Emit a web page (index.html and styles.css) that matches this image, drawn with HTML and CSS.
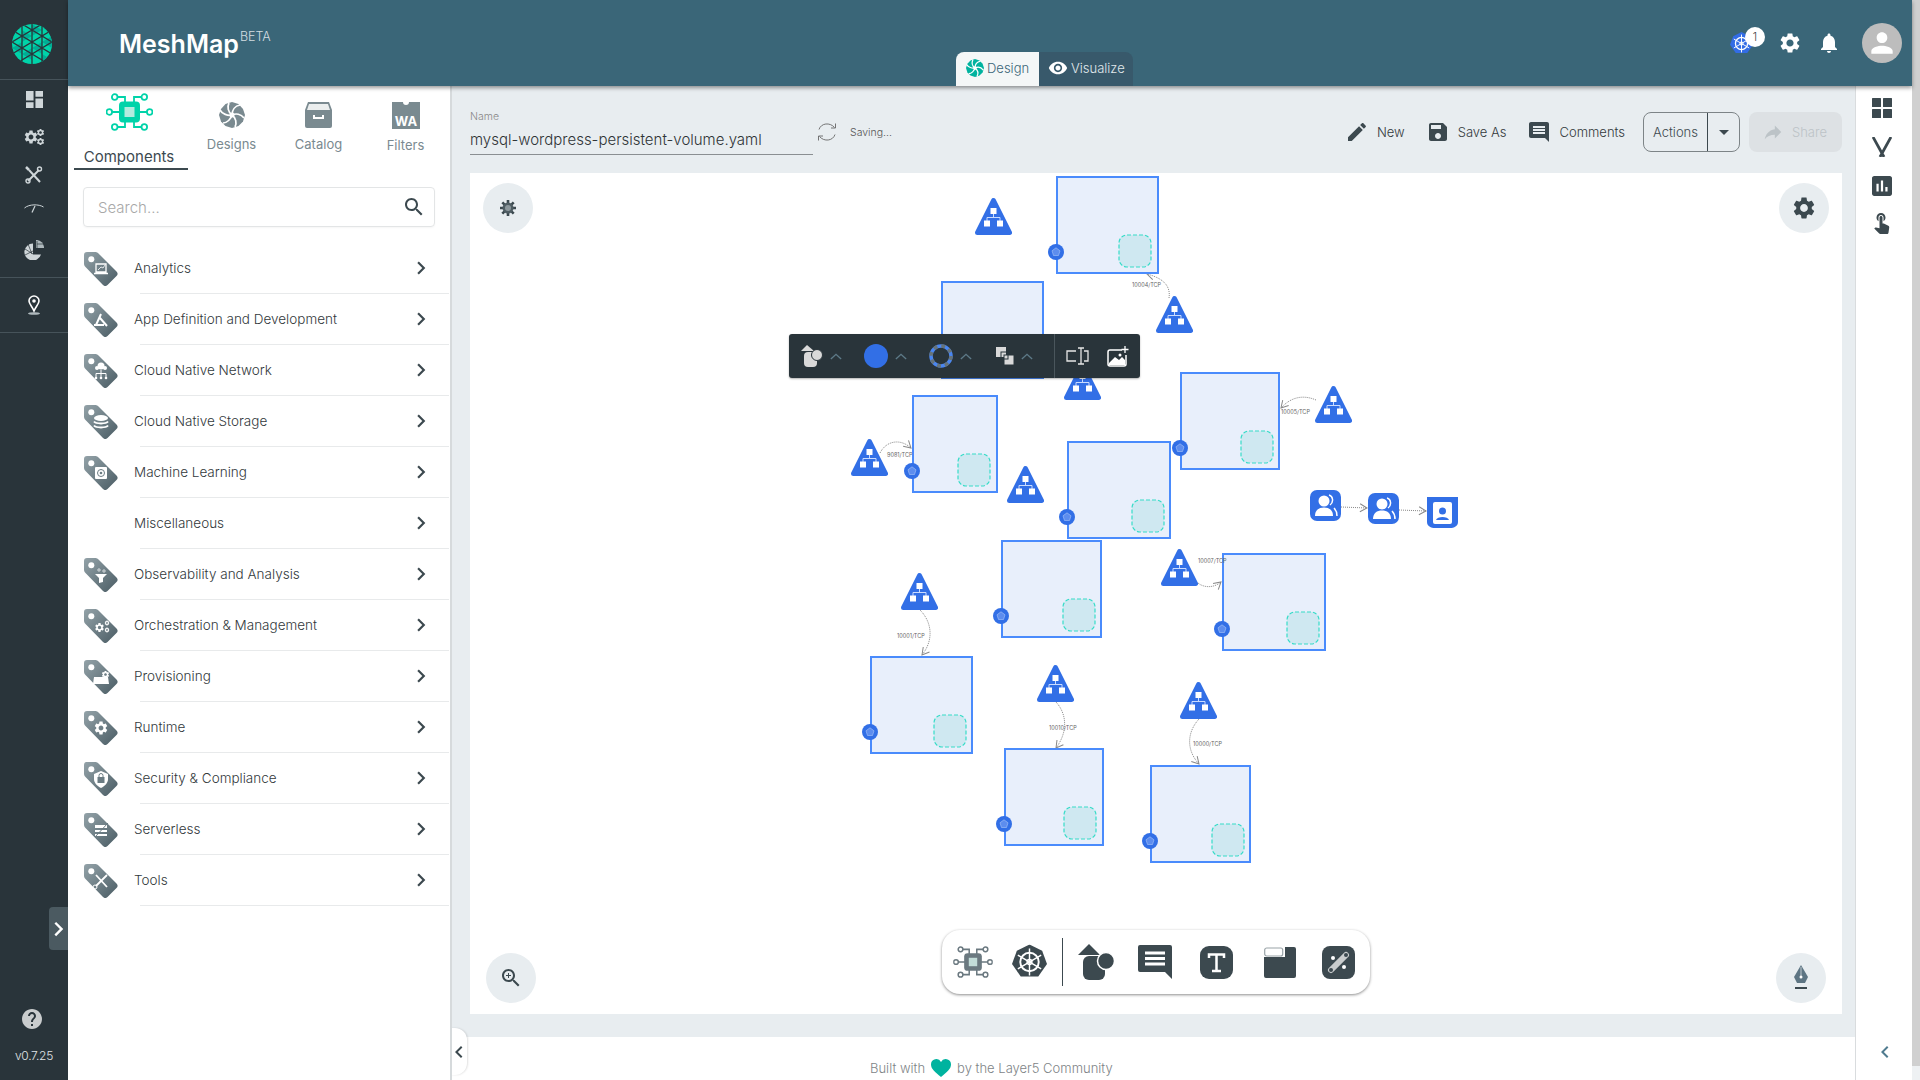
FILE: index.html
```html
<!DOCTYPE html>
<html lang="en">
<head>
    <meta charset="UTF-8">
    <meta name="viewport" content="width=device-width, initial-scale=1.0">
    <title>MeshMap</title>
    <link rel="stylesheet" href="styles.css">
</head>
<body>
    <!-- shared icons -->
    <svg class="sprite" aria-hidden="true">
        <defs>
            <linearGradient id="tagFill" x1="0" y1="0" x2="1" y2="1">
                <stop offset="0" stop-color="#93a2a8"/>
                <stop offset="1" stop-color="#4a5c64"/>
            </linearGradient>
            <clipPath id="logoClip"><circle cx="20" cy="20" r="20"/></clipPath>
            <marker id="arrow" markerWidth="10" markerHeight="10" refX="8" refY="5" orient="auto" markerUnits="userSpaceOnUse">
                <path d="M1 1L8 5L1 9" fill="none" stroke="#888" stroke-width="1"/>
            </marker>

            <symbol id="i-gear" viewBox="0 0 24 24"><path d="M19.14 12.94c.04-.3.06-.61.06-.94 0-.32-.02-.64-.07-.94l2.03-1.58c.18-.14.23-.41.12-.61l-1.92-3.32c-.12-.22-.37-.29-.59-.22l-2.39.96c-.5-.38-1.03-.7-1.62-.94l-.36-2.54c-.04-.24-.24-.41-.48-.41h-3.84c-.24 0-.43.17-.47.41l-.36 2.54c-.59.24-1.13.57-1.62.94l-2.39-.96c-.22-.08-.47 0-.59.22L2.74 8.87c-.12.21-.08.47.12.61l2.03 1.58c-.05.3-.09.63-.09.94s.02.64.07.94l-2.03 1.58c-.18.14-.23.41-.12.61l1.92 3.32c.12.22.37.29.59.22l2.39-.96c.5.38 1.03.7 1.62.94l.36 2.54c.05.24.24.41.48.41h3.84c.24 0 .44-.17.47-.41l.36-2.54c.59-.24 1.13-.56 1.62-.94l2.39.96c.22.08.47 0 .59-.22l1.92-3.32c.12-.22.07-.47-.12-.61l-2.01-1.58zM12 15.6c-1.98 0-3.6-1.62-3.6-3.6s1.62-3.6 3.6-3.6 3.6 1.62 3.6 3.6-1.62 3.6-3.6 3.6z"/></symbol>
            <symbol id="i-chevron" viewBox="0 0 24 24"><path d="M10 6L8.59 7.41 13.17 12l-4.58 4.59L10 18l6-6z"/></symbol>
            <symbol id="i-up" viewBox="0 0 14 8"><path d="M1 7L7 1.5L13 7" fill="none" stroke="currentColor" stroke-width="1.6"/></symbol>
            <symbol id="i-swirl" viewBox="0 0 26 26">
                <path d="M13 0l6.5 2 4.5 5 2 6-2 6.500-4.500 4.500-6.500 2-6.500-2L2 19.500 0 13l2-6 4.500-5z" fill="currentColor"/>
                <g fill="none" stroke="#fff" stroke-width="1.700">
                    <path d="M13 13C13 8 16 4 21 3"/>
                    <path d="M13 13C17 11 22 12 25 16"/>
                    <path d="M13 13C17 16 18 21 16 25"/>
                    <path d="M13 13C12 17 8 21 4 21"/>
                    <path d="M13 13C9 14 3 12 1 8"/>
                    <path d="M13 13C9 10 8 5 10 1"/>
                </g>
                <circle cx="13" cy="13" r="2.500" fill="#fff"/>
            </symbol>
            <symbol id="i-chip" viewBox="0 0 47 38">
                <g fill="none" stroke="currentColor" stroke-width="1.800">
                    <circle cx="8.700" cy="4" r="2.800"/><circle cx="38.300" cy="4" r="2.800"/>
                    <circle cx="3.300" cy="19" r="2.800"/><circle cx="43.700" cy="19" r="2.800"/>
                    <circle cx="8.700" cy="34" r="2.800"/><circle cx="38.300" cy="34" r="2.800"/>
                    <path d="M11.500 4H19V10M35.500 4H28V10M6 19H14M41 19H33M11.500 34H19V28M35.500 34H28V28"/>
                </g>
                <rect x="13" y="8.500" width="21" height="21" rx="4" fill="currentColor"/>
                <rect x="18.500" y="14" width="10" height="10" fill="#d2efe9" opacity="0.85"/>
            </symbol>
            <symbol id="i-wheel" viewBox="0 0 36 36">
                <path d="M18 0l13 6.500 5 13.500-9 13H9L0 20 5 6.500z" fill="currentColor"/>
                <g fill="none" stroke="#fff">
                    <circle cx="18" cy="18" r="9.500" stroke-width="2"/>
                    <circle cx="18" cy="18" r="2.500" stroke-width="1.500"/>
                    <path d="M18 4v28M6 11l24 14M30 11L6 25" stroke-width="1.500"/>
                </g>
            </symbol>
            <symbol id="i-tag" viewBox="0 0 34 34">
                <path d="M3 0h8c1.500 0 2.500.5 3.500 1.500l18 18c1.500 1.500 1.500 3 0 4.500l-9 9c-1.500 1.500-3 1.500-4.500 0L1.500 15C.5 14 0 13 0 11.500V3C0 1 1 0 3 0z" fill="url(#tagFill)"/>
                <circle cx="7.300" cy="7.300" r="3" fill="#fff"/>
            </symbol>
            <symbol id="i-lb" viewBox="0 0 37 38">
                <path d="M18.500 3.500L34.500 35.500H2.500Z" fill="#326fe6" stroke="#326fe6" stroke-width="5" stroke-linejoin="round"/>
                <path d="M18.500 16V20M12 24V20.500H25V24" fill="none" stroke="#c9dbff" stroke-width="1"/>
                <rect x="15.500" y="11" width="6" height="6" fill="#fff"/>
                <rect x="9" y="23.500" width="6" height="6" fill="#fff"/>
                <rect x="22" y="23.500" width="6" height="6" fill="#fff"/>
            </symbol>
            <symbol id="i-port" viewBox="0 0 16 16">
                <circle cx="8" cy="8" r="8" fill="#326fe6"/>
                <path d="M8 3.800L12 6.800L10.500 11.500H5.500L4 6.800Z" fill="#5d8dee" stroke="#a9c4f7" stroke-width="0.6"/>
            </symbol>
            <symbol id="i-people" viewBox="0 0 31 31">
                <rect width="31" height="31" rx="7" fill="#326fe6"/>
                <circle cx="14" cy="11" r="5.500" fill="#fff"/>
                <path d="M5 26c0-6 4-8.500 9-8.500s9 2.500 9 8.500z" fill="#fff"/>
                <path d="M19 5c4 1 5 7 1 10M24 18c2 2 3 5 3 8" fill="none" stroke="#fff" stroke-width="1.500"/>
            </symbol>
        </defs>
    </svg>

    <aside class="rail">
        <div class="rail-logo">
            <svg width="40" height="40" viewBox="0 0 40 40">
                <g clip-path="url(#logoClip)">
                    <rect width="40" height="40" fill="#00d3a9"/>
                    <path d="M20 0L30 6L20 12ZM10 6V18L20 12ZM30 18L40 12V24ZM20 24L30 18V30ZM0 24L10 18V30ZM10 30L20 36V24ZM30 30L40 36L30 40Z" fill="#00ad95"/>
                    <path d="M10 0V40M20 0V40M30 0V40M-5 3L45 33M-5 15L45 45M-5 -9L45 21M45 3L-5 33M45 15L-5 45M45 -9L-5 21" stroke="#29343a" stroke-width="1.300"/>
                </g>
            </svg>
        </div>
        <nav class="rail-group">
            <div class="rail-item">
                <svg width="17" height="17" viewBox="3 3 18 18" fill="#cfd6d9"><path d="M3 13h8V3H3v10zm0 8h8v-6H3v6zm10 0h8V11h-8v10zm0-18v6h8V3h-8z"/></svg>
            </div>
            <div class="rail-item">
                <svg width="22" height="18" viewBox="0 0 22 18" fill="#cfd6d9">
                    <use href="#i-gear" x="0" y="1" width="16" height="16"/>
                    <use href="#i-gear" x="13" y="0" width="9" height="9"/>
                    <use href="#i-gear" x="13" y="9" width="9" height="9"/>
                </svg>
            </div>
            <div class="rail-item">
                <svg width="18" height="18" viewBox="0 0 18 18" fill="none" stroke="#cfd6d9">
                    <path d="M4 4L15 16" stroke-width="2"/>
                    <path d="M14 4L3 15" stroke-width="2"/>
                    <circle cx="14.500" cy="3" r="2" stroke-width="1.400"/>
                    <circle cx="3" cy="15" r="2" stroke-width="1.400"/>
                    <path d="M1 1L4 4" stroke-width="2.500"/>
                </svg>
            </div>
            <div class="rail-item rail-item-short">
                <svg width="20" height="10" viewBox="0 0 20 10" fill="none" stroke="#cfd6d9">
                    <path d="M0.500 5C5 1 15 1 19.500 4" stroke-width="1"/>
                    <path d="M11 3L8 9.500" stroke-width="1.200"/>
                </svg>
            </div>
            <div class="rail-item rail-item-tall">
                <svg width="20" height="20" viewBox="0 0 20 20">
                    <path d="M9 3.500a8.500 8.500 0 1 0 8 11H9z" fill="#cfd6d9"/>
                    <path d="M12 0a7.500 7.500 0 0 1 8 8h-8z" fill="#aeb8bc"/>
                    <path d="M1 9L9 14M4 4L8 14M1 15L9 11M13 1V8M13 4H20" stroke="#29343a" stroke-width="0.700"/>
                </svg>
            </div>
        </nav>
        <div class="rail-pin">
            <svg width="14" height="20" viewBox="0 0 14 20">
                <path d="M7 1a5 5 0 0 0-5 5c0 3 3.500 6 5 10 1.500-4 5-7 5-10a5 5 0 0 0-5-5z" fill="none" stroke="#fff" stroke-width="1.600"/>
                <circle cx="7" cy="6" r="1.800" fill="#fff"/>
                <ellipse cx="7" cy="18.500" rx="6" ry="1.300" fill="#aeb8bc"/>
            </svg>
        </div>
        <div class="rail-bottom">
            <svg class="rail-help" width="20" height="20" viewBox="2 2 20 20" fill="#c9cccd"><path d="M12 2C6.480 2 2 6.480 2 12s4.480 10 10 10 10-4.480 10-10S17.520 2 12 2zm1 17h-2v-2h2v2zm2.070-7.750l-.9.920C13.450 12.900 13 13.500 13 15h-2v-.5c0-1.100.45-2.100 1.170-2.830l1.240-1.260c.37-.36.59-.86.59-1.410 0-1.100-.9-2-2-2s-2 .9-2 2H8c0-2.210 1.790-4 4-4s4 1.790 4 4c0 .88-.36 1.680-.93 2.250z"/></svg>
            <span class="rail-version">v0.7.25</span>
        </div>
        <div class="rail-expand">
            <svg width="24" height="30" viewBox="4 2 16 20" fill="#fff"><use href="#i-chevron" width="24" height="24"/></svg>
        </div>
    </aside>

    <div class="app">
        <header class="topbar">
            <div class="brand">MeshMap<sup>BETA</sup></div>
            <div class="mode-switch">
                <div class="mode mode-active">
                    <svg class="mode-swirl" width="18" height="18"><use href="#i-swirl"/></svg>Design
                </div>
                <div class="mode">
                    <svg width="20" height="20" viewBox="0 0 24 24" fill="#fff"><path d="M12 4.500C7 4.500 2.730 7.610 1 12c1.730 4.390 6 7.500 11 7.500s9.270-3.110 11-7.500c-1.730-4.390-6-7.500-11-7.500zM12 17c-2.760 0-5-2.240-5-5s2.240-5 5-5 5 2.240 5 5-2.240 5-5 5zm0-8c-1.660 0-3 1.340-3 3s1.340 3 3 3 3-1.340 3-3-1.340-3-3-3z"/></svg>Visualize
                </div>
            </div>
            <div class="top-icons">
                <div class="kube">
                    <svg class="kube-wheel" width="23" height="23"><use href="#i-wheel"/></svg>
                    <span class="kube-badge">1</span>
                </div>
                <svg class="top-gear" width="24" height="24" fill="#fff"><use href="#i-gear"/></svg>
                <svg class="top-bell" width="24" height="24" viewBox="0 0 24 24" fill="#fff"><path d="M12 22c1.100 0 2-.9 2-2h-4c0 1.100.9 2 2 2zm6-6v-5c0-3.070-1.630-5.640-4.500-6.320V4c0-.83-.67-1.500-1.500-1.500s-1.500.67-1.500 1.500v.68C7.640 5.360 6 7.920 6 11v5l-2 2v1h16v-1l-2-2z"/></svg>
                <div class="avatar">
                    <svg width="32" height="32" viewBox="0 0 24 24" fill="#fff"><path d="M12 12c2.210 0 4-1.790 4-4s-1.790-4-4-4-4 1.790-4 4 1.790 4 4 4zm0 2c-2.670 0-8 1.340-8 4v2h16v-2c0-2.660-5.330-4-8-4z"/></svg>
                </div>
            </div>
        </header>

        <div class="workspace">
            <section class="panel">
                <div class="tabs">
                    <div class="tab tab-active">
                        <svg width="47" height="38"><use href="#i-chip"/></svg>
                        <span>Components</span>
                    </div>
                    <div class="tab">
                        <svg width="26" height="26"><use href="#i-swirl"/></svg>
                        <span>Designs</span>
                    </div>
                    <div class="tab">
                        <svg width="27" height="26" viewBox="0 0 27 26">
                            <path d="M3 0h21l3 8v16a2 2 0 0 1-2 2H2a2 2 0 0 1-2-2V8z" fill="#7a8a90"/>
                            <path d="M4 2h19l2 6H2z" fill="#fff" opacity="0.85"/>
                            <path d="M8 13v4h11v-4h-2v2H10v-2z" fill="#fff"/>
                        </svg>
                        <span>Catalog</span>
                    </div>
                    <div class="tab">
                        <svg width="28" height="27" viewBox="0 0 28 27">
                            <path d="M0 0h11a3 3 0 0 0 6 0h11v27H0z" fill="#7a8a90"/>
                            <text class="wa" x="14" y="24">WA</text>
                        </svg>
                        <span>Filters</span>
                    </div>
                </div>

                <div class="search">
                    <span>Search...</span>
                    <svg width="24" height="24" viewBox="0 0 24 24" fill="#3c494f"><path d="M15.500 14h-.79l-.28-.27C15.410 12.590 16 11.110 16 9.500 16 5.910 13.090 3 9.500 3S3 5.910 3 9.500 5.910 16 9.500 16c1.610 0 3.090-.59 4.230-1.570l.27.28v.79l5 4.990L20.490 19l-4.990-5zm-6 0C7.010 14 5 11.990 5 9.500S7.010 5 9.500 5 14 7.010 14 9.500 11.990 14 9.500 14z"/></svg>
                </div>

                <ul class="categories">
                    <li class="cat">
                        <svg class="tag" width="34" height="34" viewBox="0 0 34 34"><use href="#i-tag" width="34" height="34"/><path d="M12 12h10v8H12zM10 21.500h14" fill="none" stroke="#fff" stroke-width="1.300"/><path d="M14 18l3-3 2 1 2-3" fill="none" stroke="#fff" stroke-width="0.800"/></svg>
                        <div class="cat-body"><span class="cat-name">Analytics</span><svg class="cat-arrow" width="26" height="26"><use href="#i-chevron"/></svg></div>
                    </li>
                    <li class="cat">
                        <svg class="tag" width="34" height="34" viewBox="0 0 34 34"><use href="#i-tag" width="34" height="34"/><path d="M17 11L12 22M16 15L23 23M10 22H20" fill="none" stroke="#fff" stroke-width="2"/></svg>
                        <div class="cat-body"><span class="cat-name">App Definition and Development</span><svg class="cat-arrow" width="26" height="26"><use href="#i-chevron"/></svg></div>
                    </li>
                    <li class="cat">
                        <svg class="tag" width="34" height="34" viewBox="0 0 34 34"><use href="#i-tag" width="34" height="34"/><circle cx="17" cy="12" r="3.500" fill="#fff"/><circle cx="13" cy="14" r="2" fill="#fff"/><circle cx="21" cy="14" r="2" fill="#fff"/><path d="M17 16V23M12 23V19.500H22V23" fill="none" stroke="#fff"/><circle cx="12" cy="24" r="1.300" fill="#fff"/><circle cx="17" cy="24" r="1.300" fill="#fff"/><circle cx="22" cy="24" r="1.300" fill="#fff"/></svg>
                        <div class="cat-body"><span class="cat-name">Cloud Native Network</span><svg class="cat-arrow" width="26" height="26"><use href="#i-chevron"/></svg></div>
                    </li>
                    <li class="cat">
                        <svg class="tag" width="34" height="34" viewBox="0 0 34 34"><use href="#i-tag" width="34" height="34"/><ellipse cx="17" cy="13" rx="7" ry="3" fill="#fff"/><path d="M10 16.500c2 2.500 12 2.500 14 0M10 20.500c2 2.500 12 2.500 14 0" fill="none" stroke="#fff" stroke-width="2"/></svg>
                        <div class="cat-body"><span class="cat-name">Cloud Native Storage</span><svg class="cat-arrow" width="26" height="26"><use href="#i-chevron"/></svg></div>
                    </li>
                    <li class="cat">
                        <svg class="tag" width="34" height="34" viewBox="0 0 34 34"><use href="#i-tag" width="34" height="34"/><rect x="11" y="11" width="12" height="12" rx="1" fill="#fff"/><circle cx="17" cy="17" r="3.500" fill="none" stroke="#6b7c83"/><circle cx="17" cy="17" r="1.300" fill="#6b7c83"/></svg>
                        <div class="cat-body"><span class="cat-name">Machine Learning</span><svg class="cat-arrow" width="26" height="26"><use href="#i-chevron"/></svg></div>
                    </li>
                    <li class="cat">
                        <div class="tag tag-empty"></div>
                        <div class="cat-body"><span class="cat-name">Miscellaneous</span><svg class="cat-arrow" width="26" height="26"><use href="#i-chevron"/></svg></div>
                    </li>
                    <li class="cat">
                        <svg class="tag" width="34" height="34" viewBox="0 0 34 34"><use href="#i-tag" width="34" height="34"/><path d="M11 16H23L19 20V24L15 25V20Z" fill="#fff"/><circle cx="15" cy="12" r="1.200" fill="none" stroke="#fff" stroke-width="0.700"/><circle cx="20" cy="13" r="1.200" fill="none" stroke="#fff" stroke-width="0.700"/></svg>
                        <div class="cat-body"><span class="cat-name">Observability and Analysis</span><svg class="cat-arrow" width="26" height="26"><use href="#i-chevron"/></svg></div>
                    </li>
                    <li class="cat">
                        <svg class="tag" width="34" height="34" viewBox="0 0 34 34" fill="#fff"><use href="#i-tag" width="34" height="34"/><use href="#i-gear" x="10" y="13" width="11" height="11"/><use href="#i-gear" x="20" y="11" width="6" height="6"/><use href="#i-gear" x="20" y="18" width="6" height="6"/></svg>
                        <div class="cat-body"><span class="cat-name">Orchestration &amp; Management</span><svg class="cat-arrow" width="26" height="26"><use href="#i-chevron"/></svg></div>
                    </li>
                    <li class="cat">
                        <svg class="tag" width="34" height="34" viewBox="0 0 34 34" fill="#fff"><use href="#i-tag" width="34" height="34"/><path d="M10 17h14l1 7H9z"/><use href="#i-gear" x="17" y="10" width="9" height="9"/></svg>
                        <div class="cat-body"><span class="cat-name">Provisioning</span><svg class="cat-arrow" width="26" height="26"><use href="#i-chevron"/></svg></div>
                    </li>
                    <li class="cat">
                        <svg class="tag" width="34" height="34" viewBox="0 0 34 34" fill="#fff"><use href="#i-tag" width="34" height="34"/><use href="#i-gear" x="9" y="9" width="16" height="16"/></svg>
                        <div class="cat-body"><span class="cat-name">Runtime</span><svg class="cat-arrow" width="26" height="26"><use href="#i-chevron"/></svg></div>
                    </li>
                    <li class="cat">
                        <svg class="tag" width="34" height="34" viewBox="0 0 34 34"><use href="#i-tag" width="34" height="34"/><path d="M17 9L24 12V17C24 21 21 24 17 26C13 24 10 21 10 17V12Z" fill="#fff"/><rect x="13.500" y="15" width="7" height="6" fill="#6b7c83"/><path d="M15 15V13.500a2 2 0 0 1 4 0V15" fill="none" stroke="#6b7c83"/></svg>
                        <div class="cat-body"><span class="cat-name">Security &amp; Compliance</span><svg class="cat-arrow" width="26" height="26"><use href="#i-chevron"/></svg></div>
                    </li>
                    <li class="cat">
                        <svg class="tag" width="34" height="34" viewBox="0 0 34 34"><use href="#i-tag" width="34" height="34"/><path d="M11 12H23V15H11ZM11 17H23V19H11ZM11 21H23V23H11Z" fill="#fff"/><path d="M24 10L11 24" stroke="#6b7c83"/></svg>
                        <div class="cat-body"><span class="cat-name">Serverless</span><svg class="cat-arrow" width="26" height="26"><use href="#i-chevron"/></svg></div>
                    </li>
                    <li class="cat">
                        <svg class="tag" width="34" height="34" viewBox="0 0 34 34"><use href="#i-tag" width="34" height="34"/><path d="M12 11L23 23M23 11L12 22" fill="none" stroke="#fff" stroke-width="1.800"/><circle cx="11" cy="23" r="2" fill="none" stroke="#fff"/></svg>
                        <div class="cat-body"><span class="cat-name">Tools</span><svg class="cat-arrow" width="26" height="26"><use href="#i-chevron"/></svg></div>
                    </li>
                </ul>
            </section>

            <main class="main">
                <div class="doc-bar">
                    <div class="doc-name">
                        <label>Name</label>
                        <div class="doc-input">mysql-wordpress-persistent-volume.yaml</div>
                    </div>
                    <svg class="doc-sync" width="20" height="20" viewBox="0 0 20 20" fill="none" stroke="#666" stroke-width="0.900">
                        <path d="M2 7.500C4 1 13 0 17.500 5.500M18 12.500C16 19 7 20 2.500 14.500"/>
                        <path d="M18.500 1.500V6H14M1.500 18.500V14H6"/>
                    </svg>
                    <span class="doc-status">Saving...</span>
                    <div class="doc-actions">
                        <div class="act act-new">
                            <svg width="24" height="24" viewBox="0 0 24 24" fill="#3c494f"><path d="M3 17.250V21h3.750L17.810 9.940l-3.750-3.750L3 17.250zM20.710 7.040c.39-.39.39-1.020 0-1.410l-2.340-2.340c-.39-.39-1.020-.39-1.410 0l-1.830 1.830 3.750 3.750 1.830-1.830z"/></svg>New
                        </div>
                        <div class="act act-save">
                            <svg width="24" height="24" viewBox="0 0 24 24" fill="#3c494f"><path d="M17 3H5c-1.110 0-2 .9-2 2v14c0 1.100.89 2 2 2h14c1.100 0 2-.9 2-2V7l-4-4zm-5 16c-1.660 0-3-1.340-3-3s1.340-3 3-3 3 1.340 3 3-1.340 3-3 3zm3-10H5V5h10v4z"/></svg>Save As
                        </div>
                        <div class="act act-comment">
                            <svg width="24" height="24" viewBox="0 0 24 24" fill="#3c494f"><path d="M21.990 4c0-1.100-.89-2-1.990-2H4c-1.100 0-2 .9-2 2v12c0 1.100.9 2 2 2h14l4 4-.01-18zM18 14H6v-2h12v2zm0-3H6V9h12v2zm0-3H6V6h12v2z"/></svg>Comments
                        </div>
                        <div class="split">
                            <span class="split-label">Actions</span>
                            <span class="split-arrow"><svg width="24" height="24" viewBox="0 0 24 24" fill="#3c494f"><path d="M7 10l5 5 5-5z"/></svg></span>
                        </div>
                        <div class="share">
                            <svg width="22" height="22" viewBox="0 0 24 24" fill="#bcc3c7"><path d="M14 9V5l7 7-7 7v-4.100c-5 0-8.500 1.600-11 5.100 1-5 4-10 11-11z"/></svg>Share
                        </div>
                    </div>
                </div>

                <div class="canvas">
                    <!-- viewBox is in page coordinates so nodes read the same as the design -->
                    <svg class="graph" viewBox="470 173 1372 841" width="1372" height="841">
                        <g class="edges">
                            <path d="M1169 298C1171 285 1162 278 1147 274"/>
                            <path d="M1316 400C1302 394 1290 398 1281 408"/>
                            <path d="M880 453C886 441 900 438 911 448"/>
                            <path d="M1198 583C1204 588 1214 588 1221 582"/>
                            <path d="M920 610C932 622 934 640 922 655"/>
                            <path d="M1056 702C1067 714 1068 732 1056 748"/>
                            <path d="M1199 719C1187 732 1186 750 1199 764"/>
                            <path d="M1341 507L1367 508"/>
                            <path d="M1399 510L1426 511"/>
                        </g>
                        <g class="boxes">
                            <rect x="1057" y="177" width="101" height="96"/>
                            <rect x="942" y="282" width="101" height="96"/>
                            <rect x="913" y="396" width="84" height="96"/>
                            <rect x="1181" y="373" width="98" height="96"/>
                            <rect x="1068" y="442" width="102" height="96"/>
                            <rect x="1002" y="541" width="99" height="96"/>
                            <rect x="1223" y="554" width="102" height="96"/>
                            <rect x="871" y="657" width="101" height="96"/>
                            <rect x="1005" y="749" width="98" height="96"/>
                            <rect x="1151" y="766" width="99" height="96"/>
                        </g>
                        <g class="slots">
                            <rect x="1119" y="235" width="32" height="32" rx="8"/>
                            <rect x="958" y="454" width="32" height="32" rx="8"/>
                            <rect x="1241" y="431" width="32" height="32" rx="8"/>
                            <rect x="1132" y="500" width="32" height="32" rx="8"/>
                            <rect x="1063" y="599" width="32" height="32" rx="8"/>
                            <rect x="1287" y="612" width="32" height="32" rx="8"/>
                            <rect x="934" y="715" width="32" height="32" rx="8"/>
                            <rect x="1064" y="807" width="32" height="32" rx="8"/>
                            <rect x="1212" y="824" width="32" height="32" rx="8"/>
                        </g>
                        <use href="#i-port" x="1048" y="244" width="16" height="16"/>
                        <use href="#i-port" x="904" y="463" width="16" height="16"/>
                        <use href="#i-port" x="1172" y="440" width="16" height="16"/>
                        <use href="#i-port" x="1059" y="509" width="16" height="16"/>
                        <use href="#i-port" x="993" y="608" width="16" height="16"/>
                        <use href="#i-port" x="1214" y="621" width="16" height="16"/>
                        <use href="#i-port" x="862" y="724" width="16" height="16"/>
                        <use href="#i-port" x="996" y="816" width="16" height="16"/>
                        <use href="#i-port" x="1142" y="833" width="16" height="16"/>

                        <use href="#i-lb" x="975" y="197" width="37" height="38"/>
                        <use href="#i-lb" x="1156" y="295" width="37" height="38"/>
                        <use href="#i-lb" x="1064" y="362" width="37" height="38"/>
                        <use href="#i-lb" x="851" y="438" width="37" height="38"/>
                        <use href="#i-lb" x="1007" y="465" width="37" height="38"/>
                        <use href="#i-lb" x="1315" y="385" width="37" height="38"/>
                        <use href="#i-lb" x="1161" y="548" width="37" height="38"/>
                        <use href="#i-lb" x="901" y="572" width="37" height="38"/>
                        <use href="#i-lb" x="1037" y="664" width="37" height="38"/>
                        <use href="#i-lb" x="1180" y="681" width="37" height="38"/>

                        <use href="#i-people" x="1310" y="490" width="31" height="31"/>
                        <use href="#i-people" x="1368" y="493" width="31" height="31"/>
                        <g>
                            <path d="M1427 497H1458V522C1458 526 1454 528 1450 528H1435C1431 528 1427 526 1427 522Z" fill="#326fe6"/>
                            <rect x="1433" y="502" width="19" height="22" rx="2" fill="#fff"/>
                            <circle cx="1442.500" cy="511" r="3.500" fill="#326fe6"/>
                            <path d="M1436 520c1-4 12-4 13 0z" fill="#326fe6"/>
                        </g>

                        <g class="edge-labels">
                            <text x="1132" y="287">10004/TCP</text>
                            <text x="1281" y="414">10005/TCP</text>
                            <text x="887" y="457">9081/TCP</text>
                            <text x="1198" y="563">10007/TCP</text>
                            <text x="897" y="638">10001/TCP</text>
                            <text x="1049" y="730">10010/TCP</text>
                            <text x="1193" y="746">10000/TCP</text>
                        </g>
                    </svg>

                    <div class="round-btn btn-tl">
                        <svg width="18" height="18" viewBox="0 0 18 18" fill="none">
                            <path d="M9 1V17M1 9H17M3.300 3.300L14.700 14.700M14.700 3.300L3.300 14.700" stroke="#3c494f" stroke-width="2.600"/>
                            <circle cx="9" cy="9" r="5.500" fill="#4f5d63"/>
                            <circle cx="9" cy="9" r="3" fill="#8c979c"/>
                        </svg>
                    </div>
                    <div class="round-btn btn-tr">
                        <svg width="26" height="26" fill="#3c494f"><use href="#i-gear"/></svg>
                    </div>
                    <div class="round-btn btn-bl">
                        <svg width="24" height="24" viewBox="0 0 24 24" fill="#3c494f"><path d="M15.500 14h-.79l-.28-.27C15.410 12.590 16 11.110 16 9.500 16 5.910 13.090 3 9.500 3S3 5.910 3 9.500 5.910 16 9.500 16c1.610 0 3.090-.59 4.230-1.570l.27.28v.79l5 4.990L20.490 19l-4.990-5zm-6 0C7.010 14 5 11.990 5 9.500S7.010 5 9.500 5 14 7.010 14 9.500 11.990 14 9.500 14zm2.500-4h-2v2H9v-2H7V9h2V7h1v2h2v1z"/></svg>
                    </div>
                    <div class="round-btn btn-br">
                        <svg width="18" height="26" viewBox="0 0 18 26">
                            <path d="M9 0L16 12L13 18H5L2 12Z" fill="#5d7583"/>
                            <path d="M9 2V11" stroke="#fff" stroke-width="0.600"/>
                            <circle cx="9" cy="12" r="1.500" fill="#fff"/>
                            <rect x="3" y="22" width="12" height="2" fill="#3c494f"/>
                        </svg>
                    </div>

                    <div class="shape-bar">
                        <svg class="sb-shape" width="22" height="22" viewBox="0 0 22 22" fill="#d9d9d9">
                            <path d="M6 0L13 6H0Z"/><rect x="3" y="7" width="13" height="15" rx="4"/><circle cx="16" cy="10" r="5.500" stroke="#29343a" stroke-width="1"/>
                        </svg>
                        <svg class="sb-up" width="12" height="7"><use href="#i-up"/></svg>
                        <span class="sb-fill"></span>
                        <svg class="sb-up" width="12" height="7"><use href="#i-up"/></svg>
                        <svg class="sb-ring" width="24" height="24" viewBox="0 0 24 24" fill="none">
                            <circle cx="12" cy="12" r="10" stroke="#4a86f0" stroke-width="3.500"/>
                            <circle cx="12" cy="12" r="10" stroke="#667379" stroke-width="3.500" stroke-dasharray="3.900 3.950"/>
                        </svg>
                        <svg class="sb-up" width="12" height="7"><use href="#i-up"/></svg>
                        <svg class="sb-layer" width="18" height="18" viewBox="0 0 18 18" fill="#d9d9d9">
                            <rect width="10" height="10"/><rect x="8" y="8" width="10" height="10" stroke="#29343a"/><rect x="5" y="5" width="7" height="7" fill="none" stroke="#29343a"/>
                        </svg>
                        <svg class="sb-up" width="12" height="7"><use href="#i-up"/></svg>
                        <span class="sb-divider"></span>
                        <svg class="sb-text" width="23" height="18" viewBox="0 0 23 18" fill="none" stroke="#e6e6e6" stroke-width="1.300">
                            <path d="M10 4H1V14H10M18 4H22V14H18M12 1H18M12 17H18M15 1V17"/>
                        </svg>
                        <svg class="sb-image" width="22" height="21" viewBox="0 0 22 21">
                            <path d="M15 4H3a2 2 0 0 0-2 2v12a2 2 0 0 0 2 2h14a2 2 0 0 0 2-2V9" fill="none" stroke="#fff" stroke-width="1.500"/>
                            <path d="M2 17L8 11L12 14L15 11L18 14V19H2Z" fill="#fff"/>
                            <circle cx="13" cy="9" r="1.500" fill="#fff"/>
                            <path d="M18 0V7M14.500 3.500H21.500" stroke="#fff" stroke-width="1.300"/>
                        </svg>
                    </div>

                    <div class="dock">
                        <svg width="40" height="32" viewBox="0 0 47 38" class="dock-chip"><use href="#i-chip" width="47" height="38"/></svg>
                        <svg width="35" height="36" viewBox="0 0 36 36" class="dock-wheel"><use href="#i-wheel" width="36" height="36"/></svg>
                        <span class="dock-divider"></span>
                        <svg width="36" height="36" viewBox="0 0 36 36" fill="#3c494f">
                            <path d="M11 0L22 11H0Z"/><rect x="5" y="12" width="22" height="24" rx="6"/><circle cx="28" cy="17" r="8.500" stroke="#fff" stroke-width="1.500"/>
                        </svg>
                        <svg width="34" height="34" viewBox="0 0 34 34" fill="#3c494f">
                            <path d="M2 0H32A2 2 0 0 1 34 2V34L27 27H2A2 2 0 0 1 0 25V2A2 2 0 0 1 2 0Z"/>
                            <path d="M7 8H27M7 13.500H27M7 19H27" stroke="#fff" stroke-width="3"/>
                        </svg>
                        <svg width="33" height="33" viewBox="0 0 33 33">
                            <rect width="33" height="33" rx="9" fill="#3c494f"/>
                            <path d="M9 12V8.500H24V12M16.500 8.500V25M12 25H21" fill="none" stroke="#fff" stroke-width="2.500"/>
                        </svg>
                        <svg width="32" height="31" viewBox="0 0 32 31">
                            <path d="M21 0H30A2 2 0 0 1 32 2V29A2 2 0 0 1 30 31H2A2 2 0 0 1 0 29V10H21Z" fill="#3c494f"/>
                            <rect x="0.700" y="1" width="18" height="8" rx="2" fill="#fff" stroke="#9aa4a8" stroke-width="1.200"/>
                        </svg>
                        <svg width="33" height="33" viewBox="0 0 33 33">
                            <rect width="33" height="33" rx="8" fill="#3c494f"/>
                            <path d="M9 24L24 9" stroke="#c9cccd" stroke-width="6" stroke-linecap="round"/>
                            <circle cx="9" cy="24" r="2" fill="#3c494f"/><circle cx="24" cy="9" r="2" fill="#3c494f"/>
                            <circle cx="11" cy="12" r="2" fill="#fff"/><circle cx="22" cy="21" r="2" fill="#fff"/>
                        </svg>
                    </div>
                </div>

                <div class="gutter"></div>
                <footer class="credits">
                    Built with
                    <svg class="heart" width="20" height="18" viewBox="0 0 20 18" fill="#00b39f"><path d="M10 18C4 13 0 10 0 5.500A5.300 5.300 0 0 1 10 3 5.300 5.300 0 0 1 20 5.500C20 10 16 13 10 18Z"/></svg>
                    by the Layer5 Community
                </footer>
                <div class="panel-toggle">
                    <svg width="20" height="24" viewBox="4 0 16 24" fill="#3c494f"><use href="#i-chevron" transform="rotate(180 12 12)" width="24" height="24"/></svg>
                </div>
            </main>

            <aside class="side">
                <svg width="20" height="20" viewBox="0 0 20 20" fill="#3c494f">
                    <rect width="9" height="9" rx="0.500"/><rect x="11" width="9" height="9" rx="0.500"/><rect y="11" width="9" height="9" rx="0.500"/><rect x="11" y="11" width="9" height="9" rx="0.500"/>
                </svg>
                <svg width="20" height="20" viewBox="0 0 20 20" fill="none" stroke="#3c494f" stroke-width="2.800">
                    <path d="M1 0L12 20M19 0L8 20"/>
                </svg>
                <svg width="20" height="20" viewBox="3 3 18 18" fill="#3c494f"><path d="M19 3H5c-1.100 0-2 .9-2 2v14c0 1.100.9 2 2 2h14c1.100 0 2-.9 2-2V5c0-1.100-.9-2-2-2zM9 17H7v-7h2v7zm4 0h-2V7h2v10zm4 0h-2v-4h2v4z"/></svg>
                <svg class="side-touch" width="20" height="22" viewBox="5 2 15 22" fill="#3c494f"><path d="M9 11.240V7.500C9 6.120 10.120 5 11.500 5S14 6.120 14 7.500v3.740c1.210-.81 2-2.180 2-3.740C16 5.010 13.990 3 11.500 3S7 5.010 7 7.500c0 1.560.79 2.930 2 3.740zm9.840 4.630l-4.540-2.260c-.17-.07-.35-.11-.54-.11H13v-6c0-.83-.67-1.500-1.500-1.500S10 6.670 10 7.500v10.740l-3.430-.72c-.08-.01-.15-.03-.24-.03-.31 0-.59.13-.79.33l-.79.8 4.940 4.940c.27.27.65.44 1.060.44h6.790c.75 0 1.330-.55 1.440-1.280l.75-5.270c.01-.07.02-.14.020-.2 0-.62-.38-1.160-.91-1.380z"/></svg>
                <svg class="side-collapse" width="14" height="18" viewBox="6 3 12 18" fill="#4f7b8f"><use href="#i-chevron" transform="rotate(180 12 12)" width="24" height="24"/></svg>
            </aside>
        </div>
    </div>

    <div class="scrollbar"></div>
</body>
</html>
```

FILE: styles.css
```css
* {
    box-sizing: border-box;
}
body {
    margin: 0;
    height: 100vh;
    display: flex;
    overflow: hidden;
    font-family: 'Inter', 'Liberation Sans', sans-serif;
    font-weight: 300;
    color: #3c494f;
    background-color: #fff;
}
.sprite {
    position: absolute;
    width: 0;
    height: 0;
}

/* left rail */
.rail {
    position: relative;
    width: 68px;
    flex: none;
    display: flex;
    flex-direction: column;
    background-color: #29343a;
}
.rail-logo {
    height: 80px;
    padding: 24px 4px 0 0;
    display: flex;
    justify-content: center;
    border-bottom: 1px solid #46535a;
}
.rail-group {
    height: 198px;
    border-bottom: 1px solid #46535a;
}
.rail-item {
    height: 38px;
    display: flex;
    align-items: center;
    justify-content: center;
}
.rail-item-short {
    height: 28px;
}
.rail-item-tall {
    height: 56px;
}
.rail-pin {
    height: 55px;
    display: flex;
    align-items: center;
    justify-content: center;
    border-bottom: 1px solid #46535a;
}
.rail-bottom {
    margin-top: auto;
    padding: 0 4px 17px 0;
    display: flex;
    flex-direction: column;
    align-items: center;
    color: #e0e4e6;
    font-size: 12px;
}
.rail-help {
    margin-bottom: 19px;
}
.rail-version {
    margin-left: 4px;
    letter-spacing: -0.3px;
}
.rail-expand {
    position: absolute;
    left: 49px;
    top: 907px;
    width: 19px;
    height: 43px;
    display: flex;
    align-items: center;
    justify-content: center;
    background-color: #4b5a61;
    border-radius: 4px 0 0 4px;
}

/* top bar */
.app {
    flex: 1;
    min-width: 0;
    display: flex;
    flex-direction: column;
}
.topbar {
    position: relative;
    z-index: 3;
    height: 86px;
    flex: none;
    display: flex;
    background-color: #3a6678;
    box-shadow: 0 2px 4px rgba(0, 0, 0, 0.4);
}
.brand {
    width: 888px;
    padding: 27px 0 0 51px;
    color: #fff;
    font-size: 25px;
    font-weight: 600;
    line-height: 34px;
}
.brand sup {
    margin-left: 1px;
    font-size: 12.500px;
    font-weight: 300;
    line-height: 0;
    color: #d3dde1;
    vertical-align: 12px;
}
.mode-switch {
    align-self: flex-end;
    display: flex;
    height: 34px;
    font-size: 13px;
}
.mode {
    width: 94px;
    padding: 0 0 2px 9px;
    display: flex;
    align-items: center;
    gap: 3px;
    color: #e0e8ec;
    background-color: #38596b;
    border-radius: 0 8px 0 0;
}
.mode-active {
    width: 83px;
    padding-left: 10px;
    color: #3a6678;
    background-color: #f4f7f7;
    border-radius: 8px 0 0 0;
}
.mode-swirl {
    color: #00b39f;
}
.top-icons {
    margin-left: auto;
    padding-right: 10px;
    display: flex;
    align-items: center;
}
.kube {
    position: relative;
    width: 23px;
    height: 23px;
    color: #326ce5;
}
.kube-wheel {
    display: block;
}
.kube-badge {
    position: absolute;
    left: 15px;
    top: -5px;
    width: 20px;
    height: 20px;
    border-radius: 50%;
    background-color: #fff;
    color: #444;
    font-size: 11px;
    line-height: 20px;
    text-align: center;
}
.top-gear {
    margin-left: 25px;
}
.top-bell {
    margin-left: 15px;
}
.avatar {
    width: 40px;
    height: 40px;
    margin-left: 21px;
    border-radius: 50%;
    background-color: #bdbdbd;
    display: flex;
    align-items: center;
    justify-content: center;
}

/* workspace */
.workspace {
    flex: 1;
    min-height: 0;
    display: flex;
}
.panel {
    position: relative;
    z-index: 2;
    width: 384px;
    flex: none;
    border-right: 2px solid #d6dadc;
    background-color: #fff;
}
.tabs {
    height: 84px;
    padding-left: 6px;
    display: flex;
}
.tab {
    width: 87px;
    padding-top: 16px;
    display: flex;
    flex-direction: column;
    align-items: center;
    color: #7a8a90;
    font-size: 13px;
    font-weight: 400;
}
.tab svg {
    display: block;
}
.tab span {
    margin-top: 8px;
}
.tab-active {
    width: 114px;
    padding: 7px 4px 0 0;
    color: #00d3a9;
    border-bottom: 2px solid #3c494f;
}
.tab-active span {
    margin-top: 16px;
    color: #3c494f;
    font-size: 15px;
}
.wa {
    fill: #fff;
    font-size: 13px;
    font-weight: 700;
    text-anchor: middle;
}
.search {
    width: 352px;
    height: 40px;
    margin: 17px 0 16px 15px;
    padding: 0 8px 0 14px;
    display: flex;
    align-items: center;
    justify-content: space-between;
    border: 1px solid #e3e5e6;
    border-radius: 4px;
    color: #a8a8a8;
    font-size: 15px;
    box-shadow: 0 1px 2px rgba(0, 0, 0, 0.04);
}
.categories {
    margin: 0;
    padding: 0 1px 0 16px;
    list-style: none;
}
.cat {
    display: flex;
    align-items: center;
    height: 51px;
}
.tag {
    flex: none;
    width: 34px;
    height: 34px;
}
.tag-empty {
    background: none;
}
.cat-body {
    flex: 1;
    height: 51px;
    margin-left: 22px;
    padding-right: 15px;
    display: flex;
    align-items: center;
    justify-content: space-between;
    border-bottom: 1px solid #e8eaeb;
}
.cat-name {
    margin-left: -6px;
    font-size: 13.500px;
    color: #33393c;
}
.cat-arrow {
    fill: #3c494f;
}

/* main column */
.main {
    position: relative;
    flex: 1;
    min-width: 0;
    display: flex;
    flex-direction: column;
    background-color: #e8edf0;
}
.doc-bar {
    height: 87px;
    flex: none;
    padding: 0 13px 0 18px;
    display: flex;
    align-items: center;
}
.doc-name {
    width: 343px;
    margin-top: 5px;
}
.doc-name label {
    display: block;
    color: #888;
    font-size: 10.500px;
}
.doc-input {
    height: 32px;
    padding-top: 7px;
    border-bottom: 1px solid #8a8f92;
    color: #2f3436;
    font-size: 15px;
}
.doc-sync {
    margin-left: 4px;
    margin-top: 5px;
}
.doc-status {
    margin-left: 13px;
    margin-top: 5px;
    color: #555;
    font-size: 10.500px;
}
.doc-actions {
    margin-left: auto;
    margin-top: 5px;
    display: flex;
    align-items: center;
    font-size: 13px;
}
.act {
    display: flex;
    align-items: center;
    gap: 8px;
    color: #33393c;
}
.act-save,
.act-comment {
    margin-left: 21px;
}
.split {
    width: 97px;
    height: 40px;
    margin-left: 18px;
    display: flex;
    align-items: center;
    border: 1px solid #7d8487;
    border-radius: 8px;
}
.split-label {
    width: 64px;
    text-align: center;
    line-height: 38px;
    border-right: 1px solid #3c494f;
}
.split-arrow {
    flex: 1;
    display: flex;
    justify-content: center;
}
.share {
    width: 93px;
    height: 40px;
    margin-left: 9px;
    padding-left: 13px;
    display: flex;
    align-items: center;
    gap: 8px;
    border-radius: 8px;
    background-color: #dde1e4;
    color: #bcc3c7;
}

/* canvas */
.canvas {
    position: relative;
    flex: 1;
    margin: 0 13px 0 18px;
    background-color: #fff;
}
.graph {
    position: absolute;
    left: 0;
    top: 0;
    display: block;
}
.edges path {
    fill: none;
    stroke: #888;
    stroke-width: 1;
    stroke-dasharray: 1 1;
    marker-end: url(#arrow);
}
.boxes rect {
    fill: #e8effb;
    stroke: #4a8bfc;
    stroke-width: 2;
}
.slots rect {
    fill: #cfe8f1;
    stroke: #36dcc8;
    stroke-width: 1.200;
    stroke-dasharray: 4 2;
}
.edge-labels text {
    fill: #666;
    font-size: 5.500px;
    font-weight: 400;
}
.round-btn {
    position: absolute;
    width: 50px;
    height: 50px;
    display: flex;
    align-items: center;
    justify-content: center;
    border-radius: 50%;
    background-color: #e8edf0;
}
.btn-tl {
    left: 13px;
    top: 10px;
}
.btn-tr {
    right: 13px;
    top: 10px;
}
.btn-bl {
    left: 16px;
    bottom: 11px;
}
.btn-br {
    right: 16px;
    bottom: 11px;
}

/* floating shape toolbar */
.shape-bar {
    position: absolute;
    left: 319px;
    top: 161px;
    width: 351px;
    height: 44px;
    display: flex;
    align-items: center;
    border-radius: 3px;
    background-color: #29343a;
    box-shadow: 0 1px 2px rgba(0, 0, 0, 0.3);
}
.sb-up {
    color: #5d7a88;
    margin-left: 7px;
}
.sb-shape {
    margin-left: 12px;
}
.sb-fill {
    width: 24px;
    height: 24px;
    margin-left: 22px;
    border-radius: 50%;
    background-color: #326fe6;
}
.sb-ring {
    margin-left: 22px;
}
.sb-layer {
    margin-left: 24px;
}
.sb-up + .sb-divider {
    margin-left: 21px;
}
.sb-divider {
    width: 1px;
    height: 44px;
    background-color: #4a565c;
}
.sb-text {
    margin-left: 11px;
}
.sb-image {
    margin-left: 18px;
}

/* bottom dock */
.dock {
    position: absolute;
    left: 472px;
    bottom: 20px;
    width: 428px;
    height: 64px;
    padding-left: 11px;
    display: flex;
    align-items: center;
    border-radius: 18px;
    background-color: #fff;
    box-shadow: 0 1px 3px rgba(0, 0, 0, 0.45);
}
.dock-chip {
    color: #6b7980;
}
.dock-wheel {
    color: #3c494f;
    margin-left: 19px;
}
.dock-divider {
    width: 1px;
    height: 48px;
    margin: 0 15px;
    background-color: #3c494f;
}
.dock > :nth-child(5) {
    margin-left: 24px;
}
.dock > :nth-child(6) {
    margin-left: 28px;
}
.dock > :nth-child(7) {
    margin-left: 31px;
}
.dock > :nth-child(8) {
    margin-left: 26px;
}

/* below the canvas */
.gutter {
    height: 23px;
    flex: none;
}
.credits {
    height: 43px;
    flex: none;
    padding: 18px 0 0 418px;
    display: flex;
    align-items: center;
    gap: 6px;
    background-color: #fff;
    color: #7e8487;
    font-size: 13px;
}
.heart {
    flex: none;
}
.panel-toggle {
    position: absolute;
    left: -1px;
    bottom: 5px;
    width: 16px;
    height: 47px;
    display: flex;
    align-items: center;
    justify-content: center;
    border-radius: 0 12px 12px 0;
    background-color: #fff;
    box-shadow: 1px 0 2px rgba(0, 0, 0, 0.12);
}

/* right rail */
.side {
    position: relative;
    width: 57px;
    flex: none;
    padding: 12px 5px 0 0;
    display: flex;
    flex-direction: column;
    align-items: center;
    gap: 19px;
    border-left: 1px solid #d9dcde;
    background-color: #fff;
}
.side-touch {
    margin-top: -3px;
}
.side-collapse {
    position: absolute;
    left: 22px;
    bottom: 19px;
}

.scrollbar {
    width: 8px;
    flex: none;
    background: linear-gradient(#d0d0d0 1066px, #eef1f3 1066px);
}
```
